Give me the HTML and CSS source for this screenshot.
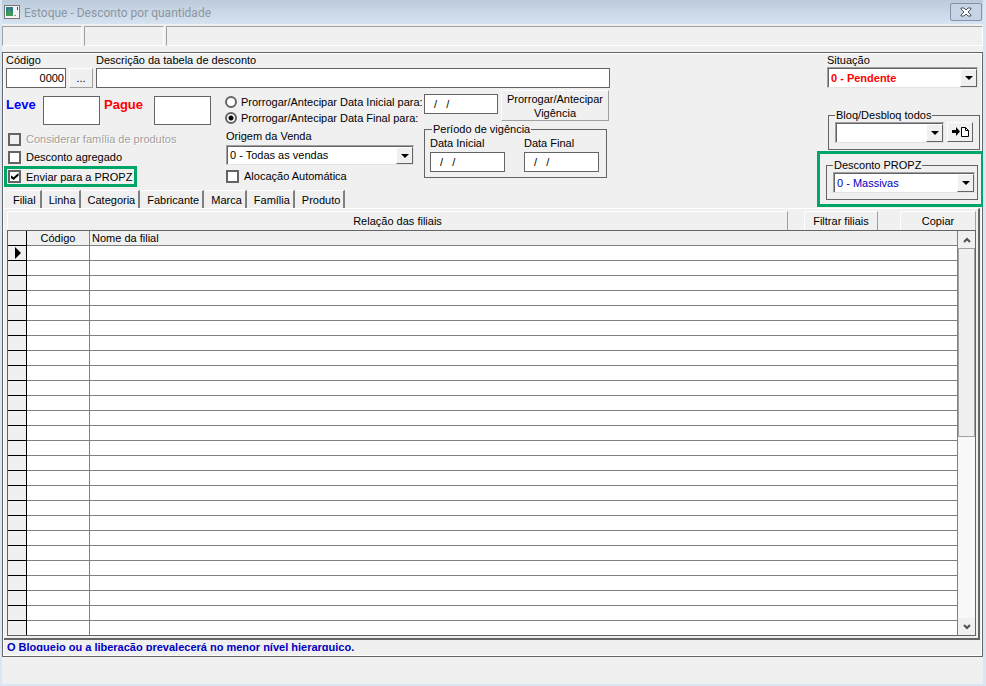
FILE: index.html
```html
<!DOCTYPE html>
<html lang="pt-BR">
<head>
    <meta charset="UTF-8">
    <title>Estoque - Desconto por quantidade</title>
    <link rel="stylesheet" href="styles.css">
</head>
<body>
    <header class="titlebar">
        <svg class="app-icon" width="16" height="14" viewBox="0 0 16 14">
            <rect x="0.5" y="0.5" width="15" height="13" fill="#f4f4f4" stroke="#777"/>
            <rect x="2" y="2" width="7" height="9" fill="#2d7d8a"/>
            <path d="M2 11V8l3-4 4 4v3z" fill="#3f9a5a"/>
            <path d="M10 10.500h2" stroke="#999"/>
            <path d="M13.500 2v3" stroke="#446"/>
        </svg>
        <h1>Estoque - Desconto por quantidade</h1>
        <button class="close" aria-label="Fechar">
            <svg width="12" height="10" viewBox="0 0 12 10">
                <path d="M1 1h3l2 2 2-2h3v1L8 5l3 3v1H8L6 7 4 9H1V8l3-3-3-3z" fill="#fff" stroke="#4f5663"/>
            </svg>
        </button>
    </header>

    <div class="toolbar">
        <div class="slot"></div>
        <div class="slot"></div>
        <div class="slot wide"></div>
    </div>

    <main class="panel">
        <div class="top">
            <div class="left">
                <div class="row id-row">
                    <div class="field">
                        <label for="codigo">Código</label>
                        <input type="text" id="codigo" class="code" value="0000">
                    </div>
                    <button class="btn browse">...</button>
                    <div class="field grow">
                        <label for="descricao">Descrição da tabela de desconto</label>
                        <input type="text" id="descricao">
                    </div>
                </div>

                <div class="row groups">
                    <div class="group-quantity">
                        <div class="row quantity">
                            <label for="leve" class="leve">Leve</label>
                            <input type="text" id="leve">
                            <label for="pague" class="pague">Pague</label>
                            <input type="text" id="pague">
                        </div>
                        <label class="check disabled"><input type="checkbox" disabled>Considerar família de produtos</label>
                        <label class="check"><input type="checkbox">Desconto agregado</label>
                        <label class="check highlight"><input type="checkbox" checked>Enviar para a PROPZ</label>
                    </div>

                    <div class="group-sale">
                        <label class="radio"><input type="radio" name="prorrogar">Prorrogar/Antecipar Data Inicial para:</label>
                        <label class="radio"><input type="radio" name="prorrogar" checked>Prorrogar/Antecipar Data Final para:</label>
                        <label for="origem" class="origem">Origem da Venda</label>
                        <div class="combo">
                            <select id="origem"><option>0 - Todas as vendas</option></select>
                            <span class="arrow"></span>
                        </div>
                        <label class="check"><input type="checkbox">Alocação Automática</label>
                    </div>

                    <div class="group-dates">
                        <div class="row extend">
                            <input type="text" class="date" aria-label="Nova data" value="  /   /">
                            <button class="btn">Prorrogar/Antecipar Vigência</button>
                        </div>
                        <fieldset class="period">
                            <legend>Período de vigência</legend>
                            <div class="field">
                                <label for="inicial">Data Inicial</label>
                                <input type="text" id="inicial" value="  /   /">
                            </div>
                            <div class="field">
                                <label for="final">Data Final</label>
                                <input type="text" id="final" value="  /   /">
                            </div>
                        </fieldset>
                    </div>
                </div>

                <nav class="tabs">
                    <button class="active">Filial</button>
                    <button>Linha</button>
                    <button>Categoria</button>
                    <button>Fabricante</button>
                    <button>Marca</button>
                    <button>Família</button>
                    <button>Produto</button>
                </nav>
            </div>

            <div class="right">
                <label for="situacao">Situação</label>
                <div class="combo status">
                    <select id="situacao"><option>0 - Pendente</option></select>
                    <span class="arrow"></span>
                </div>
                <fieldset class="block-all">
                    <legend>Bloq/Desbloq todos</legend>
                    <div class="combo">
                        <select aria-label="Bloq/Desbloq todos"><option></option></select>
                        <span class="arrow"></span>
                    </div>
                    <button class="btn apply" aria-label="Aplicar">
                        <svg width="18" height="12" viewBox="0 0 18 12">
                            <path d="M1 4h4V1l4 4.500-4 4.500V7H1z" fill="#000"/>
                            <path d="M10.500 1.500h4l3 3v6h-7zM14.500 1.500v3h3" fill="#fff" stroke="#000"/>
                        </svg>
                    </button>
                </fieldset>
                <div class="highlight propz">
                    <fieldset>
                        <legend>Desconto PROPZ</legend>
                        <div class="combo">
                            <select aria-label="Desconto PROPZ"><option>0 - Massivas</option></select>
                            <span class="arrow"></span>
                        </div>
                    </fieldset>
                </div>
            </div>
        </div>

        <section class="tab-page">
            <div class="grid-title">
                <h2>Relação das filiais</h2>
                <button class="filter">Filtrar filiais</button>
                <button class="copy">Copiar</button>
            </div>
            <div class="grid">
                <table>
                    <thead>
                        <tr><th class="marker"></th><th class="col-code">Código</th><th class="col-name">Nome da filial</th></tr>
                    </thead>
                    <tbody>
                        <tr><td class="marker"><span class="current"></span></td><td></td><td></td></tr>
                        <tr><td class="marker"></td><td></td><td></td></tr>
                        <tr><td class="marker"></td><td></td><td></td></tr>
                        <tr><td class="marker"></td><td></td><td></td></tr>
                        <tr><td class="marker"></td><td></td><td></td></tr>
                        <tr><td class="marker"></td><td></td><td></td></tr>
                        <tr><td class="marker"></td><td></td><td></td></tr>
                        <tr><td class="marker"></td><td></td><td></td></tr>
                        <tr><td class="marker"></td><td></td><td></td></tr>
                        <tr><td class="marker"></td><td></td><td></td></tr>
                        <tr><td class="marker"></td><td></td><td></td></tr>
                        <tr><td class="marker"></td><td></td><td></td></tr>
                        <tr><td class="marker"></td><td></td><td></td></tr>
                        <tr><td class="marker"></td><td></td><td></td></tr>
                        <tr><td class="marker"></td><td></td><td></td></tr>
                        <tr><td class="marker"></td><td></td><td></td></tr>
                        <tr><td class="marker"></td><td></td><td></td></tr>
                        <tr><td class="marker"></td><td></td><td></td></tr>
                        <tr><td class="marker"></td><td></td><td></td></tr>
                        <tr><td class="marker"></td><td></td><td></td></tr>
                        <tr><td class="marker"></td><td></td><td></td></tr>
                        <tr><td class="marker"></td><td></td><td></td></tr>
                        <tr><td class="marker"></td><td></td><td></td></tr>
                        <tr><td class="marker"></td><td></td><td></td></tr>
                        <tr><td class="marker"></td><td></td><td></td></tr>
                        <tr><td class="marker"></td><td></td><td></td></tr>
                    </tbody>
                </table>
                <div class="scrollbar">
                    <button aria-label="Subir">
                        <svg width="8" height="6" viewBox="0 0 8 6"><path d="M1 5l3-3 3 3" fill="none" stroke="#505050" stroke-width="2"/></svg>
                    </button>
                    <div class="track"><div class="thumb"></div></div>
                    <button aria-label="Descer">
                        <svg width="8" height="6" viewBox="0 0 8 6"><path d="M1 1l3 3 3-3" fill="none" stroke="#505050" stroke-width="2"/></svg>
                    </button>
                </div>
            </div>
        </section>

        <p class="notice">O Bloqueio ou a liberação prevalecerá no menor nível hierarquico.</p>
    </main>
</body>
</html>
```

FILE: styles.css
```css
* {
    box-sizing: border-box;
}
body {
    margin: 0;
    min-height: 100vh;
    display: flex;
    flex-direction: column;
    background-color: #f0f0f0;
    border: solid #dbe6f4;
    border-width: 0 3px 2px 2px;
    color: #000;
}
body, input, select, button {
    font-family: "Liberation Sans", Arial, sans-serif;
    font-size: 11px;
    line-height: 14px;
}
h1, h2, p {
    margin: 0;
    font-size: 11px;
    font-weight: normal;
}
.row {
    display: flex;
}

/* title bar and toolbar */
.titlebar {
    display: flex;
    align-items: center;
    height: 24px;
    padding-left: 2px;
    background: linear-gradient(#bccbdb, #d6e3f1);
}
.titlebar h1 {
    flex: 1;
    margin-left: 4px;
    padding-top: 2px;
    font-family: Roboto, sans-serif;
    font-size: 12px;
    color: #8e959e;
}
.close {
    display: flex;
    align-items: center;
    justify-content: center;
    width: 32px;
    height: 18px;
    margin-right: 1px;
    padding: 0;
    background: #c6d4e5;
    border: 1px solid #8493ab;
    border-radius: 2px;
}
.toolbar {
    display: flex;
    gap: 2px;
    margin: 2px 0 6px;
}
.slot {
    width: 80px;
    height: 20px;
    border: 1px solid #a0a0a0;
    border-right-color: #fff;
    border-bottom-color: #fff;
}
.wide {
    flex: 1;
}

/* form */
.panel {
    border: 1px solid #646464;
    box-shadow: inset 1px 1px #fff, inset -1px -1px #fff;
}
.top {
    display: flex;
    justify-content: space-between;
    padding: 0 2px 0 3px;
}
.left {
    width: 604px;
}
.field {
    display: flex;
    flex-direction: column;
}
.id-row .field {
    gap: 1px;
}
.grow {
    flex: 1;
}
input[type="text"] {
    width: 100%;
    height: 20px;
    padding: 0 3px;
    border: 1px solid #646464;
    border-radius: 0;
    background-color: #fff;
}
input.code {
    width: 60px;
    padding: 0 1px;
    text-align: right;
}
.btn {
    padding: 0;
    background-color: #f0f0f0;
    border: 1px solid #fff;
    border-right-color: #a0a0a0;
    border-bottom-color: #a0a0a0;
}
.id-row {
    align-items: flex-end;
    gap: 3px;
}
.browse {
    width: 24px;
    height: 20px;
}
.groups {
    margin-top: 2px;
}
.group-quantity {
    width: 219px;
    padding-top: 6px;
}
.quantity {
    margin-bottom: 6px;
}
.quantity input[type="text"] {
    width: 57px;
    height: 29px;
}
.leve, .pague {
    width: 37px;
    font-size: 13px;
    font-weight: bold;
    line-height: 18px;
    color: #00f;
}
.pague {
    width: 50px;
    margin-left: 4px;
    color: #f00;
}
.check, .radio {
    display: flex;
    align-items: center;
    gap: 5px;
    width: fit-content;
    height: 16px;
}
.check input {
    appearance: none;
    display: grid;
    place-items: center;
    width: 13px;
    height: 13px;
    margin: 0;
    border: 2px solid #646464;
    background-color: #fff;
}
.check input:checked::before {
    content: "";
    width: 8px;
    height: 7px;
    background-color: #000;
    clip-path: polygon(0 30%, 38% 62%, 100% 0, 100% 38%, 38% 100%, 0 68%);
}
.check input:disabled {
    background-color: #f0f0f0;
}
.disabled {
    color: #a0a0a0;
    text-shadow: 1px 1px #fff;
}
.group-quantity .check {
    margin-left: 2px;
    margin-bottom: 2px;
}
.highlight {
    border: 3px solid #00a666;
}
.group-quantity .highlight {
    height: 21px;
    margin: -1px 0 0 -2px;
    padding: 0 2px 0 1px;
}
.group-sale {
    width: 199px;
    padding-top: 4px;
}
.radio {
    gap: 4px;
    white-space: nowrap;
}
.radio input {
    appearance: none;
    width: 12px;
    height: 12px;
    margin: 0;
    border: 2px solid #646464;
    border-radius: 50%;
    background-color: #fff;
}
.radio input:checked {
    background: radial-gradient(circle, #000 2px, #fff 3px);
}
.origem {
    display: block;
    margin: 3px 0 2px 1px;
}
.group-sale .combo {
    width: 188px;
    margin-left: 1px;
}
.group-sale .check {
    margin: 3px 0 0 1px;
}
.combo {
    position: relative;
    height: 20px;
}
.combo select {
    appearance: none;
    display: block;
    width: 100%;
    height: 100%;
    padding: 0 20px 0 3px;
    border: 1px solid #a0a0a0;
    border-right-color: #e3e3e3;
    border-bottom-color: #e3e3e3;
    border-radius: 0;
    background-color: #fff;
    box-shadow: inset 1px 1px #646464;
}
.combo .arrow {
    position: absolute;
    top: 2px;
    right: 1px;
    bottom: 1px;
    display: flex;
    align-items: center;
    justify-content: center;
    width: 17px;
    background-color: #f0f0f0;
    border: 1px solid #fff;
    border-right-color: #646464;
    border-bottom-color: #646464;
    pointer-events: none;
}
.combo .arrow::before {
    content: "";
    border: 4px solid transparent;
    border-top-color: #000;
    border-bottom: 0;
}
.extend {
    gap: 3px;
}
.extend .date {
    width: 74px;
    margin-top: 4px;
}
.extend .btn {
    width: 108px;
    height: 31px;
}
fieldset {
    min-width: 0;
    margin: 0;
    padding: 0 6px 6px;
    border: 1px solid #646464;
}
fieldset .combo {
    height: 21px;
}
legend {
    padding: 0 1px;
}
.period {
    display: flex;
    gap: 19px;
    width: 183px;
    margin-top: 1px;
    padding: 0 5px 5px;
}
.period legend {
    margin-left: 2px;
}
.period .field {
    width: 75px;
    gap: 2px;
}

.right {
    display: flex;
    flex-direction: column;
    width: 153px;
    padding-top: 1px;
}
.right label {
    line-height: 13px;
}
.status {
    margin-right: 2px;
}
.combo.status {
    height: 21px;
}
.combo.status select {
    color: #f00;
    font-weight: bold;
}
.block-all {
    display: flex;
    gap: 3px;
    margin: 20px 0 0 1px;
}
.block-all .combo {
    flex: 1;
}
.apply {
    display: flex;
    align-items: center;
    justify-content: center;
    width: 26px;
    height: 20px;
    border-right-color: #646464;
    border-bottom-color: #646464;
}
.propz {
    position: relative;
    margin: 1px -4px 0 -10px;
    padding: 4px 3px 4px 6px;
}
.propz .combo {
    margin-right: -4px;
}
.propz select {
    color: #0000c0;
}

/* tabs */
.tabs {
    display: flex;
    margin-top: 3px;
}
.tabs button {
    height: 18px;
    padding: 1px 3px 0 7px;
    background-color: #f0f0f0;
    border: solid #fff;
    border-width: 1px 2px 0 0;
    border-right-color: #808080;
    border-top-left-radius: 3px;
}
.tabs .active {
    padding: 0 4px 0 7px;
}

/* grid */
.tab-page {
    margin: 0 2px 0 1px;
    padding: 2px 2px 2px 3px;
    border: solid #646464;
    border-width: 1px 2px 2px 0;
    border-top-color: #fff;
}
.grid-title {
    display: flex;
    height: 19px;
}
.grid-title h2 {
    flex: 1;
    line-height: 18px;
    text-align: center;
    border: 1px solid #fff;
    border-width: 1px 1px 0;
    border-right-color: #a0a0a0;
}
.grid-title button {
    padding: 0;
    background-color: #f0f0f0;
    border: solid #fff;
    border-width: 1px 1px 0;
    border-right-color: #a0a0a0;
}
.filter {
    width: 74px;
    margin: 0 22px 0 16px;
}
.copy {
    width: 76px;
}
.grid {
    display: flex;
    border: 1px solid #646464;
}
table {
    flex: 1;
    border-collapse: separate;
    border-spacing: 0;
    table-layout: fixed;
}
th, td {
    height: 15px;
    padding: 0;
    line-height: 14px;
    border: solid #808080;
    border-width: 0 1px 1px 0;
    background-color: #fff;
}
th {
    font-weight: normal;
    background-color: #f0f0f0;
}
tbody tr:last-child td {
    height: 14px;
    border-bottom: 0;
}
.marker {
    width: 19px;
    background-color: #f0f0f0;
    border-color: #000;
}
.col-code {
    width: 63px;
}
.col-name {
    padding-left: 2px;
    text-align: left;
}
.current {
    display: block;
    width: 6px;
    height: 12px;
    margin-left: 7px;
    background-color: #000;
    clip-path: polygon(0 0, 100% 50%, 0 100%);
}
.scrollbar {
    display: flex;
    flex-direction: column;
    width: 17px;
}
.scrollbar button {
    display: flex;
    align-items: center;
    justify-content: center;
    height: 17px;
    padding: 0;
    background-color: #f0f0f0;
    border: 0;
}
.track {
    flex: 1;
    background-color: #f8f8f8;
}
.thumb {
    height: 51%;
    background-color: #f0f0f0;
    border: 1px solid #a0a0a0;
}

.notice {
    height: 11px;
    margin: 0 4px 5px;
    overflow: hidden;
    font-weight: bold;
    line-height: 14px;
    color: #0000c0;
}
```
